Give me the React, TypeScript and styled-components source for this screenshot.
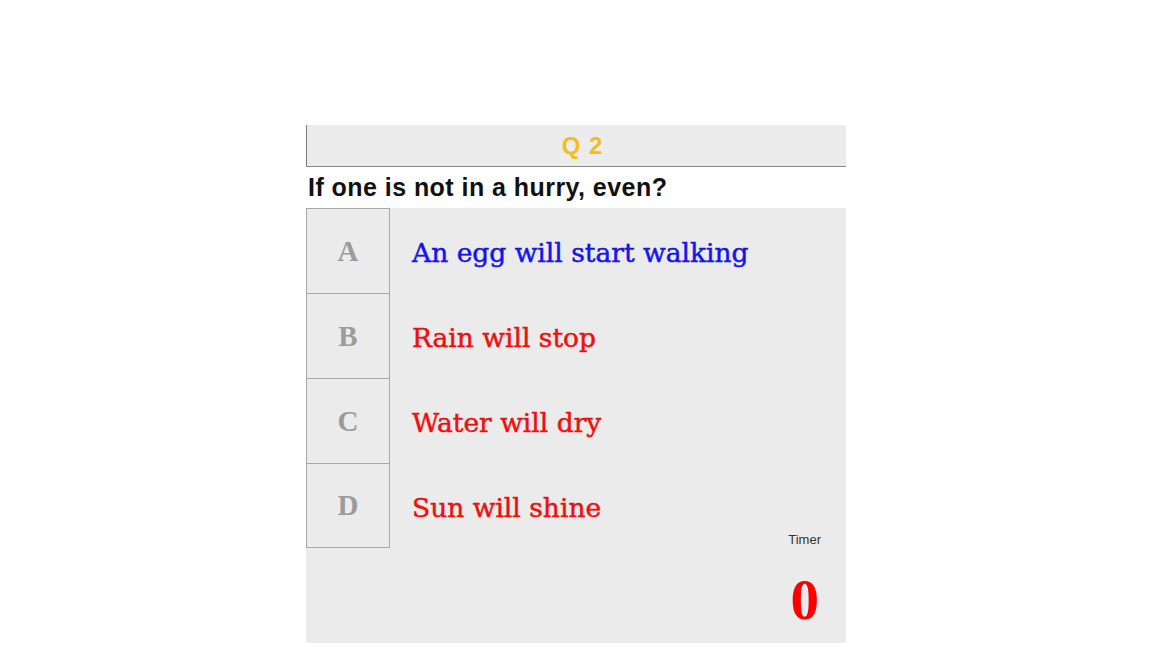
import React from "react";
import styled, { createGlobalStyle } from "styled-components";

const Global = createGlobalStyle`
  html, body { margin: 0; padding: 0; background: #ffffff; }
  body { font-family: "Liberation Sans", Arial, sans-serif; }
`;

const Page = styled.div`
  width: 1152px;
  height: 648px;
  padding-top: 125px;
  box-sizing: border-box;
  overflow: hidden;
`;

const Panel = styled.div`
  width: 540px;
  margin: 0 auto;
  display: flex;
  flex-direction: column;
  background: #ebebeb;
`;

const Header = styled.div`
  height: 42px;
  box-sizing: border-box;
  border-left: 1px solid #7a7a7a;
  border-bottom: 1px solid #8a8a8a;
  background: #ececec;
  display: flex;
  align-items: center;
  justify-content: center;
  padding-left: 12px;
  padding-top: 1px;
  font-family: "Liberation Sans", Arial, sans-serif;
  font-weight: bold;
  font-size: 24px;
  letter-spacing: 1px;
  color: #f6bd1a;
`;

const Question = styled.div`
  height: 41px;
  background: #ffffff;
  display: flex;
  align-items: center;
  padding-left: 2px;
  font-family: "Liberation Sans", Arial, sans-serif;
  font-weight: bold;
  font-size: 25px;
  letter-spacing: 0.45px;
  color: #111111;
`;

const Body = styled.div`
  height: 435px;
  display: grid;
  grid-template-columns: 1fr auto;
`;

const Options = styled.div`
  display: flex;
  flex-direction: column;
`;

const Row = styled.div`
  display: grid;
  grid-template-columns: 84px 1fr;
  height: 85px;
  align-items: center;
`;

const Letter = styled.div<{ $last?: boolean }>`
  height: 85px;
  box-sizing: border-box;
  border: 1px solid #a8a8a8;
  border-bottom: ${(p) => (p.$last ? "1px solid #a8a8a8" : "none")};
  display: flex;
  align-items: center;
  justify-content: center;
  font-family: "Liberation Serif", "Times New Roman", serif;
  font-weight: bold;
  font-size: 29px;
  color: #9b9b9b;
  background: #ebebeb;
`;

const Answer = styled.div<{ $color: string }>`
  padding-left: 22px;
  padding-top: 4px;
  font-family: "DejaVu Serif", serif;
  font-size: 26.5px;
  -webkit-text-stroke: 0.5px ${(p) => p.$color};
  color: ${(p) => p.$color};
  white-space: nowrap;
`;

const Timer = styled.div`
  align-self: end;
  display: flex;
  flex-direction: column;
  align-items: center;
  padding: 0 25px 15px 0;
`;

const TimerLabel = styled.div`
  font-family: "Liberation Sans", Arial, sans-serif;
  font-size: 13px;
  color: #333333;
  margin-bottom: 24px;
`;

const TimerValue = styled.div`
  font-family: "Liberation Serif", "Times New Roman", serif;
  font-weight: bold;
  font-size: 57px;
  line-height: 1;
  color: #ff0000;
`;

const options = [
  { key: "A", text: "An egg will start walking", color: "#1414ee" },
  { key: "B", text: "Rain will stop", color: "#ee0f0f" },
  { key: "C", text: "Water will dry", color: "#ee0f0f" },
  { key: "D", text: "Sun will shine", color: "#ee0f0f" },
];

export default function App() {
  return (
    <Page>
      <Global />
      <Panel>
        <Header>Q 2</Header>
        <Question>If one is not in a hurry, even?</Question>
        <Body>
          <Options>
            {options.map((o, i) => (
              <Row key={o.key}>
                <Letter $last={i === options.length - 1}>{o.key}</Letter>
                <Answer $color={o.color}>{o.text}</Answer>
              </Row>
            ))}
          </Options>
          <Timer>
            <TimerLabel>Timer</TimerLabel>
            <TimerValue>0</TimerValue>
          </Timer>
        </Body>
      </Panel>
    </Page>
  );
}
